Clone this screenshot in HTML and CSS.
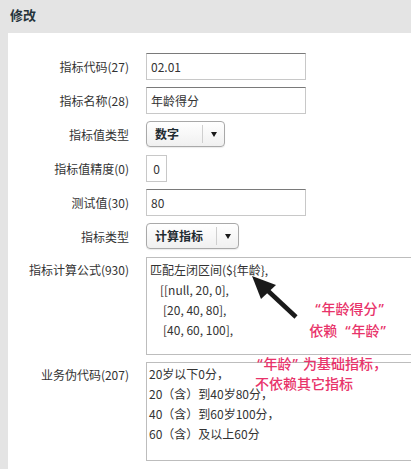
FILE: index.html
```html
<!DOCTYPE html>
<html lang="zh-CN">
<head>
<meta charset="utf-8">
<title>修改</title>
<link rel="stylesheet" href="styles.css">
</head>
<body>
<div class="header">修改</div>
<div class="panel">
  <div class="form">
    <div class="label">指标代码(27)</div>
    <div class="field"><div class="input wide">02.01</div></div>

    <div class="label">指标名称(28)</div>
    <div class="field"><div class="input wide">年龄得分</div></div>

    <div class="label">指标值类型</div>
    <div class="field">
      <div class="select"><span class="sel-text">数字</span><span class="sel-btn"><span class="caret"></span></span></div>
    </div>

    <div class="label">指标值精度(0)</div>
    <div class="field"><div class="input tiny">0</div></div>

    <div class="label">测试值(30)</div>
    <div class="field"><div class="input wide">80</div></div>

    <div class="label">指标类型</div>
    <div class="field">
      <div class="select"><span class="sel-text">计算指标</span><span class="sel-btn"><span class="caret"></span></span></div>
    </div>

    <div class="label top">指标计算公式(930)</div>
    <div class="field">
      <div class="area">
        <div class="line">匹配左闭区间(${年龄},</div>
        <div class="line ind1">[[null, 20, 0],</div>
        <div class="line ind2">[20, 40, 80],</div>
        <div class="line ind2">[40, 60, 100],</div>
      </div>
    </div>

    <div class="label top">业务伪代码(207)</div>
    <div class="field">
      <div class="area area2">
        <div class="line">20岁以下0分，</div>
        <div class="line">20（含）到40岁80分，</div>
        <div class="line">40（含）到60岁100分，</div>
        <div class="line">60（含）及以上60分</div>
      </div>
    </div>
  </div>
</div>

<svg class="arrow" width="411" height="469" viewBox="0 0 411 469" aria-hidden="true">
  <line x1="296" y1="317" x2="266" y2="289" stroke="#1a1a1a" stroke-width="4.5" stroke-linecap="butt"/>
  <polygon points="252,276 261,299 276,285" fill="#1a1a1a"/>
</svg>
<div class="note n1"><span class="q">“</span>年龄得分<span class="q">”</span></div>
<div class="note n2">依赖<span class="q gap">“</span>年龄<span class="q">”</span></div>
<div class="note n3"><span class="q">“</span>年龄<span class="q gap-r">”</span>为基础指标，</div>
<div class="note n4">不依赖其它指标</div>
</body>
</html>
```
FILE: styles.css
```css
html, body {
  margin: 0;
  padding: 0;
}
body {
  position: relative;
  width: 411px;
  height: 469px;
  overflow: hidden;
  background: #e4e4e4;
  font-family: "Noto Sans CJK SC", "Noto Sans", sans-serif;
  font-size: 12px;
  color: #333;
}
.header {
  height: 33px;
  line-height: 29px;
  padding-left: 10px;
  font-size: 13px;
  font-weight: bold;
  color: #26343b;
}
.panel {
  margin-left: 8px;
  background: #fff;
  padding-top: 20px;
  height: 436px;
  box-sizing: border-box;
  overflow: hidden;
}
.form {
  display: grid;
  grid-template-columns: 121px 1fr;
  column-gap: 17px;
  row-gap: 7px;
}
.label {
  text-align: right;
  height: 27px;
  line-height: 27px;
  color: #333;
  white-space: nowrap;
}
.label.top {
  height: auto;
  line-height: 20px;
  padding-top: 3px;
}
.field {
  display: flex;
  min-width: 0;
}
.input {
  box-sizing: border-box;
  height: 27px;
  line-height: 25px;
  border: 1px solid #c8c8c8;
  border-top-color: #7a7a7a;
  padding: 0 4px;
  color: #333;
  background: #fff;
}
.input.wide {
  width: 160px;
}
.input.tiny {
  width: 21px;
  padding: 0;
  text-align: center;
  border-top-color: #c8c8c8;
}
.select {
  display: flex;
  align-items: stretch;
  box-sizing: border-box;
  height: 26px;
  border: 1px solid #a9a9a9;
  border-radius: 4px;
  background: linear-gradient(#ffffff, #f0f0f0);
  box-shadow: 0 1px 1px rgba(0, 0, 0, 0.08);
  font-weight: bold;
  color: #1f2b31;
}
.sel-text {
  box-sizing: border-box;
  min-width: 56px;
  padding: 0 13px 0 8px;
  border-right: 1px solid #cfcfcf;
  margin: 3px 0;
  line-height: 18px;
}
.sel-btn {
  width: 21px;
  display: flex;
  align-items: center;
  justify-content: center;
}
.caret {
  width: 0;
  height: 0;
  border-left: 3.5px solid transparent;
  border-right: 3.5px solid transparent;
  border-top: 5px solid #1a1a1a;
}
.area {
  box-sizing: border-box;
  width: 300px;
  flex: none;
  height: 98px;
  border: 1px solid #bdbdbd;
  padding: 2px 3px;
  color: #333;
}
.area2 {
  height: 99px;
  padding: 1px 2px;
}
.line {
  line-height: 20px;
  white-space: pre;
}
.ind1 {
  padding-left: 10px;
}
.ind2 {
  padding-left: 13px;
}
.arrow {
  position: absolute;
  left: 0;
  top: 0;
  pointer-events: none;
}
.note {
  position: absolute;
  font-size: 14px;
  line-height: 20px;
  font-weight: 500;
  color: #e8336a;
  white-space: nowrap;
}
.q {
  font-family: "Noto Sans", sans-serif;
  margin: 0 1px;
}
.q.gap {
  margin-left: 8px;
}
.q.gap-r {
  margin-right: 5px;
}
.n1 { right: 26px; top: 298px; }
.n2 { right: 24px; top: 320px; }
.n3 { right: 24px; top: 353px; }
.n4 { left: 255px; top: 373px; }
```
